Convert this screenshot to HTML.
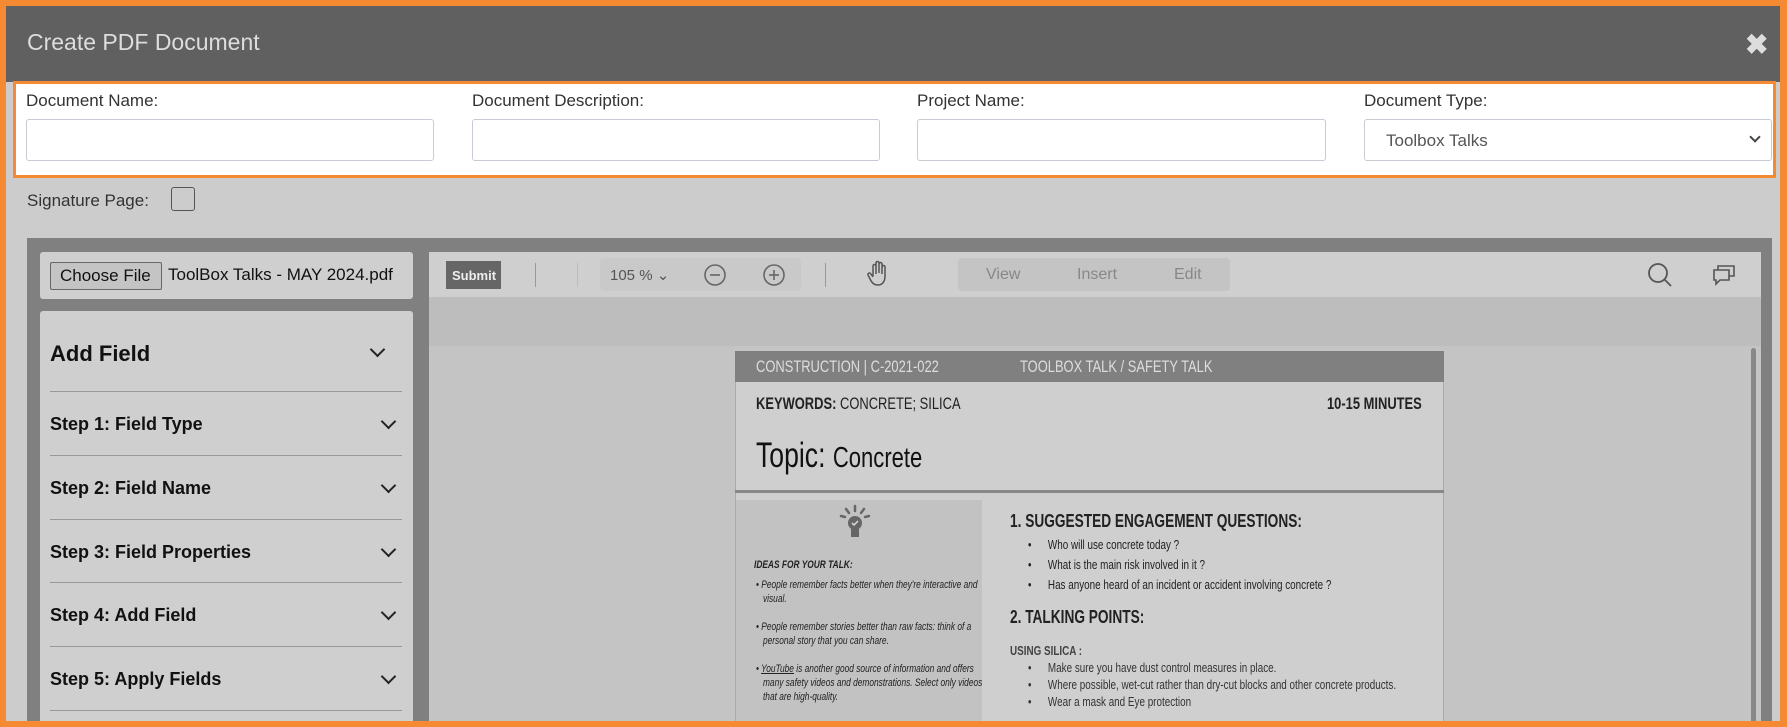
<!DOCTYPE html>
<html style="overflow:hidden;width:1787px;height:727px"><head><meta charset="utf-8"><style>
*{box-sizing:border-box;margin:0;padding:0}
body{width:1787px;height:727px;overflow:hidden;background:#f58a32;font-family:"Liberation Sans",sans-serif;position:relative}
.abs{position:absolute}
.main{left:6px;top:6px;width:1774px;height:721px;background:#cccccc}
.hdr{left:6px;top:6px;width:1774px;height:76px;background:#606060}
.panel{left:13px;top:81px;width:1763px;height:97px;background:#fff;border:3px solid #f58a32}
.lbl{font-size:17px;color:#333}
.inp{height:42px;border:1px solid #c8ccd4;border-radius:3px;background:#fff}
.nar{transform:scaleX(.76);transform-origin:left top;white-space:nowrap}
.row{left:50px;width:352px;height:64px;border-top:1px solid #999;font-weight:bold;font-size:18px;color:#111;padding-top:22px}
.chev{position:absolute;right:8px;top:24px;width:11px;height:11px;border-right:2px solid #222;border-bottom:2px solid #222;transform:rotate(45deg)}
.tb{color:#888;font-size:16px}
.pt{color:#222}
</style></head><body>
<div class="abs main"></div>
<div class="abs hdr"></div>
<div class="abs" style="left:27px;top:29px;font-size:23px;color:#ddd">Create PDF Document</div>
<div class="abs" style="left:1745px;top:28px;font-size:28px;color:#ddd;font-weight:bold">✖</div>
<div class="abs panel"></div>
<div class="abs lbl" style="left:26px;top:91px">Document Name:</div>
<div class="abs lbl" style="left:472px;top:91px">Document Description:</div>
<div class="abs lbl" style="left:917px;top:91px">Project Name:</div>
<div class="abs lbl" style="left:1364px;top:91px">Document Type:</div>
<div class="abs inp" style="left:26px;top:119px;width:408px"></div>
<div class="abs inp" style="left:472px;top:119px;width:408px"></div>
<div class="abs inp" style="left:917px;top:119px;width:409px"></div>
<div class="abs inp" style="left:1364px;top:119px;width:408px;padding:11px 0 0 21px;font-size:17px;color:#555">Toolbox Talks<span style="position:absolute;right:12px;top:13px;width:8px;height:8px;border-right:2px solid #444;border-bottom:2px solid #444;transform:rotate(45deg)"></span></div>
<div class="abs lbl" style="left:27px;top:191px">Signature Page:</div>
<div class="abs" style="left:171px;top:187px;width:24px;height:24px;border:1px solid #555;border-radius:3px"></div>

<div class="abs" style="left:27px;top:238px;width:1745px;height:489px;background:#808080"></div>
<div class="abs" style="left:40px;top:252px;width:373px;height:47px;background:#cfcfcf;border-radius:3px"></div>
<div class="abs" style="left:50px;top:262px;width:112px;height:28px;background:#c4c4c4;border:1px solid #666;border-radius:2px;font-size:17px;padding:3px 0 0 9px;color:#111">Choose File</div>
<div class="abs" style="left:168px;top:265px;font-size:17px;color:#111">ToolBox Talks - MAY 2024.pdf</div>
<div class="abs" style="left:40px;top:311px;width:373px;height:416px;background:#cfcfcf;border-radius:3px"></div>
<div class="abs" style="left:50px;top:341px;font-size:22px;font-weight:bold;color:#111">Add Field</div>
<div class="abs" style="left:372px;top:344px;width:11px;height:11px;border-right:2px solid #222;border-bottom:2px solid #222;transform:rotate(45deg)"></div>
<div class="abs row" style="top:391px">Step 1: Field Type<span class="chev"></span></div>
<div class="abs row" style="top:455px">Step 2: Field Name<span class="chev"></span></div>
<div class="abs row" style="top:519px">Step 3: Field Properties<span class="chev"></span></div>
<div class="abs row" style="top:582px">Step 4: Add Field<span class="chev"></span></div>
<div class="abs row" style="top:646px">Step 5: Apply Fields<span class="chev"></span></div>
<div class="abs" style="left:50px;top:710px;width:352px;border-top:1px solid #999"></div>

<div class="abs" style="left:429px;top:252px;width:1332px;height:475px;background:#c4c4c4"></div>
<div class="abs" style="left:429px;top:252px;width:1332px;height:45px;background:#cfcfcf"></div>
<div class="abs" style="left:429px;top:297px;width:1332px;height:49px;background:#bdbdbd"></div>
<div class="abs" style="left:446px;top:261px;width:55px;height:28px;background:#666;color:#eee;font-size:13px;font-weight:bold;padding:7px 0 0 6px">Submit</div>
<div class="abs" style="left:535px;top:263px;height:24px;border-left:1px solid #999"></div>
<div class="abs" style="left:577px;top:263px;height:24px;border-left:1px solid #bbb"></div>
<div class="abs" style="left:600px;top:258px;width:201px;height:33px;background:#c9c9c9;border-radius:4px"></div>
<div class="abs" style="left:610px;top:266px;font-size:15px;color:#555">105 % ⌄</div>
<svg class="abs" style="left:702px;top:262px" width="90" height="26"><circle cx="13" cy="13" r="10" fill="none" stroke="#666" stroke-width="1.6"/><line x1="8" y1="13" x2="18" y2="13" stroke="#666" stroke-width="1.6"/><circle cx="72" cy="13" r="10" fill="none" stroke="#666" stroke-width="1.6"/><line x1="67" y1="13" x2="77" y2="13" stroke="#666" stroke-width="1.6"/><line x1="72" y1="8" x2="72" y2="18" stroke="#666" stroke-width="1.6"/></svg>
<div class="abs" style="left:825px;top:263px;height:24px;border-left:1px solid #999"></div>
<svg class="abs" style="left:866px;top:260px" width="24" height="28"><path d="M7 16V6a1.5 1.5 0 013 0v8M10 13V3a1.5 1.5 0 013 0v10M13 13V4a1.5 1.5 0 013 0v10M16 14V7a1.5 1.5 0 013 0v9c0 6-3 9-7 9s-6-2-8-6l-2-4a1.5 1.5 0 012.5-1.5L7 17" fill="none" stroke="#555" stroke-width="1.5"/></svg>
<div class="abs" style="left:958px;top:258px;width:272px;height:33px;background:#c4c4c4;border-radius:4px"></div>
<div class="abs tb" style="left:986px;top:266px">View</div>
<div class="abs tb" style="left:1077px;top:266px">Insert</div>
<div class="abs tb" style="left:1174px;top:266px">Edit</div>
<svg class="abs" style="left:1646px;top:261px" width="28" height="28"><circle cx="12" cy="12" r="9" fill="none" stroke="#555" stroke-width="1.8"/><line x1="18.5" y1="18.5" x2="25" y2="25" stroke="#555" stroke-width="1.8"/></svg>
<svg class="abs" style="left:1711px;top:262px" width="26" height="26"><path d="M3 8h15v10H9l-4 4v-4H3z M7 8V4h16v10h-5" fill="none" stroke="#555" stroke-width="1.6"/></svg>
<div class="abs" style="left:1751px;top:348px;width:5px;height:379px;background:#888;border-radius:3px"></div>

<div class="abs" style="left:735px;top:351px;width:709px;height:376px;background:#cfcfcf;border:1px solid #aaa;overflow:hidden"></div>
<div class="abs" style="left:735px;top:351px;width:709px;height:31px;background:#808080"></div>
<div class="abs nar" style="left:756px;top:357px;color:#ddd;font-size:17px">CONSTRUCTION | C-2021-022</div>
<div class="abs nar" style="left:1020px;top:357px;color:#ddd;font-size:17px">TOOLBOX TALK / SAFETY TALK</div>
<div class="abs nar pt" style="left:756px;top:394px;font-size:17px"><b>KEYWORDS:</b> CONCRETE; SILICA</div>
<div class="abs nar pt" style="left:1327px;top:394px;font-size:17px;font-weight:bold">10-15 MINUTES</div>
<div class="abs nar" style="left:756px;top:436px;font-size:35px;color:#111">Topic: <span style="font-size:29px">Concrete</span></div>
<div class="abs" style="left:735px;top:490px;width:709px;border-top:3px solid #888"></div>
<div class="abs" style="left:736px;top:500px;width:246px;height:227px;background:#c2c2c2"></div>
<svg class="abs" style="left:838px;top:504px" width="34" height="38"><g stroke="#666" stroke-width="2.5" stroke-linecap="round"><line x1="17" y1="2" x2="17" y2="7"/><line x1="8" y1="5" x2="11" y2="9"/><line x1="26" y1="5" x2="23" y2="9"/><line x1="3" y1="12" x2="7" y2="13"/><line x1="31" y1="12" x2="27" y2="13"/></g><circle cx="17" cy="19" r="7" fill="#666"/><rect x="13" y="25" width="8" height="8" fill="#666"/><path d="M14 19l2 2 4-4" stroke="#ddd" stroke-width="1.5" fill="none"/></svg>
<div class="abs nar pt" style="left:754px;top:559px;font-size:11px;font-style:italic;font-weight:bold">IDEAS FOR YOUR TALK:</div>
<div class="abs nar pt" style="left:756px;top:578px;font-size:11px;font-style:italic;line-height:14px">• People remember facts better when they're interactive and<br>&nbsp;&nbsp;&nbsp;visual.<br><br>• People remember stories better than raw facts: think of a<br>&nbsp;&nbsp;&nbsp;personal story that you can share.<br><br>• <u>YouTube</u> is another good source of information and offers<br>&nbsp;&nbsp;&nbsp;many safety videos and demonstrations. Select only videos<br>&nbsp;&nbsp;&nbsp;that are high-quality.</div>
<div class="abs nar pt" style="left:1010px;top:511px;font-size:18px;font-weight:bold">1. SUGGESTED ENGAGEMENT QUESTIONS:</div>
<div class="abs nar pt" style="left:1028px;top:535px;font-size:13px;line-height:20px">•&nbsp;&nbsp;&nbsp;&nbsp;&nbsp;&nbsp;Who will use concrete today ?<br>•&nbsp;&nbsp;&nbsp;&nbsp;&nbsp;&nbsp;What is the main risk involved in it ?<br>•&nbsp;&nbsp;&nbsp;&nbsp;&nbsp;&nbsp;Has anyone heard of an incident or accident involving concrete ?</div>
<div class="abs nar pt" style="left:1010px;top:607px;font-size:18px;font-weight:bold">2. TALKING POINTS:</div>
<div class="abs nar" style="left:1010px;top:643px;font-size:13px;color:#444;font-weight:bold">USING SILICA :</div>
<div class="abs nar" style="left:1028px;top:659px;font-size:13px;line-height:17px;color:#333">•&nbsp;&nbsp;&nbsp;&nbsp;&nbsp;&nbsp;Make sure you have dust control measures in place.<br>•&nbsp;&nbsp;&nbsp;&nbsp;&nbsp;&nbsp;Where possible, wet-cut rather than dry-cut blocks and other concrete products.<br>•&nbsp;&nbsp;&nbsp;&nbsp;&nbsp;&nbsp;Wear a mask and Eye protection</div>
<div class="abs" style="left:0;top:721px;width:1787px;height:6px;background:#f58a32"></div>
</body></html>
